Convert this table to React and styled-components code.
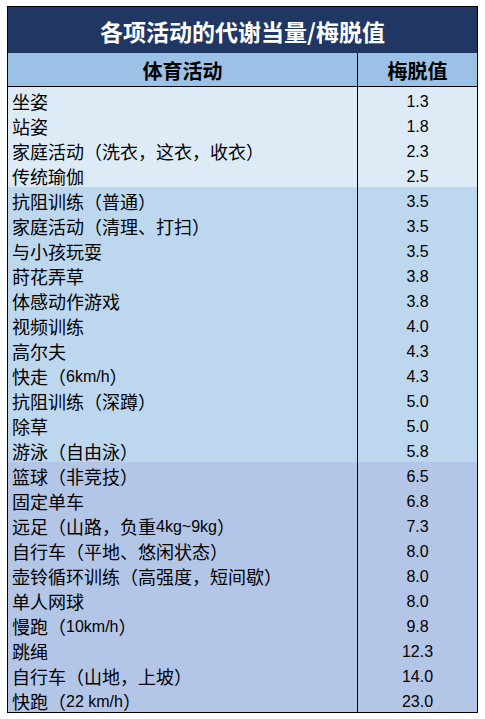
import React from "react";
import styled, { createGlobalStyle } from "styled-components";

const GlobalStyle = createGlobalStyle`
  html, body { margin: 0; padding: 0; background: #ffffff; }
  body { font-family: "Liberation Sans", "Noto Sans CJK SC", sans-serif; }
`;

const Page = styled.div`
  padding: 6px 0 0 7px;
`;

const Table = styled.div`
  width: 471px;
  box-sizing: border-box;
  border: 1px solid #000;
  display: flex;
  flex-direction: column;
`;

const Title = styled.div`
  height: 46px;
  background: #203764;
  color: #ffffff;
  display: flex;
  align-items: center;
  justify-content: center;
  font-family: "Noto Sans CJK SC", sans-serif;
  font-weight: 700;
  font-size: 23px;
  padding-top: 2px;
  box-sizing: border-box;
`;

const HeaderRow = styled.div`
  height: 34px;
  box-sizing: border-box;
  background: #9bc2e6;
  border-bottom: 1px solid #000;
  display: grid;
  grid-template-columns: 350px 1fr;
`;

const HeaderCell = styled.div`
  display: flex;
  align-items: center;
  justify-content: center;
  font-family: "Noto Sans CJK SC", sans-serif;
  font-weight: 700;
  font-size: 20px;
  color: #000;
  padding-top: 2px;
  box-sizing: border-box;
  border-right: ${(p) => (p.$divider ? "1px solid #000" : "none")};
`;

const Row = styled.div`
  height: 25px;
  display: grid;
  grid-template-columns: 350px 1fr;
  background: ${(p) => p.$bg};
`;

const NameCell = styled.div`
  display: flex;
  align-items: center;
  padding: 4px 0 0 4px;
  box-sizing: border-box;
  border-right: 1px solid #000;
  white-space: nowrap;
  color: #000;
`;

const ValueCell = styled.div`
  display: flex;
  align-items: center;
  justify-content: center;
  padding-top: 4px;
  box-sizing: border-box;
  font-family: "Liberation Sans", sans-serif;
  font-size: 16px;
  color: #000;
`;

const Run = styled.span`
  font-family: ${(p) =>
    p.$cjk ? '"Noto Sans CJK SC", sans-serif' : '"Liberation Sans", sans-serif'};
  font-size: ${(p) => (p.$cjk ? "18px" : "16px")};
  line-height: 21px;
  white-space: pre;
`;

const CJK = /([\u3000-\u303f\u4e00-\u9fff\uff00-\uffef]+)/;

function MixedText({ text }) {
  const parts = text.split(CJK).filter((s) => s.length > 0);
  return (
    <>
      {parts.map((s, i) => (
        <Run key={i} $cjk={CJK.test(s)}>
          {s}
        </Run>
      ))}
    </>
  );
}

const G1 = "#ddebf7";
const G2 = "#bdd7ee";
const G3 = "#b4c6e7";

const rows = [
  ["坐姿", "1.3", G1],
  ["站姿", "1.8", G1],
  ["家庭活动（洗衣，这衣，收衣）", "2.3", G1],
  ["传统瑜伽", "2.5", G1],
  ["抗阻训练（普通）", "3.5", G2],
  ["家庭活动（清理、打扫）", "3.5", G2],
  ["与小孩玩耍", "3.5", G2],
  ["莳花弄草", "3.8", G2],
  ["体感动作游戏", "3.8", G2],
  ["视频训练", "4.0", G2],
  ["高尔夫", "4.3", G2],
  ["快走（6km/h）", "4.3", G2],
  ["抗阻训练（深蹲）", "5.0", G2],
  ["除草", "5.0", G2],
  ["游泳（自由泳）", "5.8", G2],
  ["篮球（非竞技）", "6.5", G3],
  ["固定单车", "6.8", G3],
  ["远足（山路，负重4kg~9kg）", "7.3", G3],
  ["自行车（平地、悠闲状态）", "8.0", G3],
  ["壶铃循环训练（高强度，短间歇）", "8.0", G3],
  ["单人网球", "8.0", G3],
  ["慢跑（10km/h）", "9.8", G3],
  ["跳绳", "12.3", G3],
  ["自行车（山地，上坡）", "14.0", G3],
  ["快跑（22 km/h）", "23.0", G3],
];

export default function App() {
  return (
    <>
      <GlobalStyle />
      <Page>
        <Table>
          <Title>各项活动的代谢当量/梅脱值</Title>
          <HeaderRow>
            <HeaderCell $divider>体育活动</HeaderCell>
            <HeaderCell>梅脱值</HeaderCell>
          </HeaderRow>
          {rows.map(([name, value, bg]) => (
            <Row key={name} $bg={bg}>
              <NameCell>
                <MixedText text={name} />
              </NameCell>
              <ValueCell>{value}</ValueCell>
            </Row>
          ))}
        </Table>
      </Page>
    </>
  );
}
